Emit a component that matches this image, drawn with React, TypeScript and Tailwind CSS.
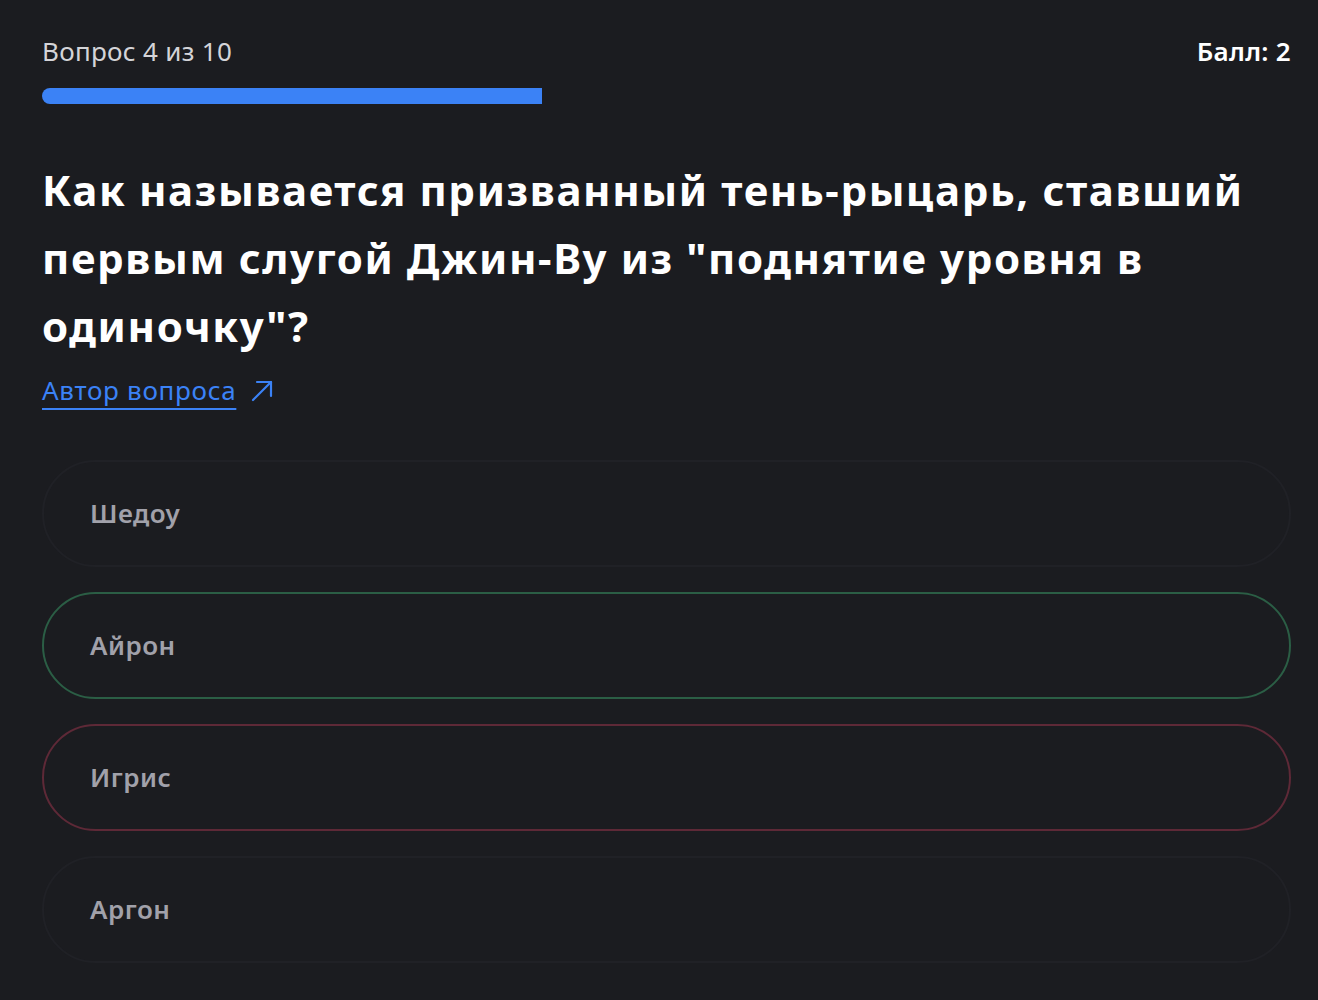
type Answer = { label: string; state: "idle" | "correct" | "wrong" };

const answers: Answer[] = [
  { label: "Шедоу", state: "idle" },
  { label: "Айрон", state: "correct" },
  { label: "Игрис", state: "wrong" },
  { label: "Аргон", state: "idle" },
];

const stateClass: Record<Answer["state"], string> = {
  idle: "border-[#202126]",
  correct: "border-[#2b5e45]",
  wrong: "border-[#5e2937]",
};

function ExternalArrow() {
  return (
    <svg width="24" height="24" viewBox="0 0 24 24" fill="none" stroke="currentColor" strokeWidth="2.2" strokeLinecap="round" strokeLinejoin="round">
      <path d="M3 22 L21 4" />
      <path d="M7 4 H21 V18" />
    </svg>
  );
}

export default function App() {
  const current = 4;
  const total = 10;
  return (
    <div
      className="min-h-screen w-full bg-[#1b1c20] text-white"
      style={{ fontFamily: '"Noto Sans", Roboto, sans-serif' }}
    >
      <div className="pl-[42px] pr-[27px] pt-[33px]">
        <div className="flex items-center justify-between">
          <span className="text-[26px] leading-[36px] tracking-[0.3px] text-[#d4d4d8]">
            Вопрос {current} из {total}
          </span>
          <span className="text-[26px] font-semibold leading-[36px] tracking-[0.3px] text-white">
            Балл: 2
          </span>
        </div>

        <div className="mt-[19px] h-[16px] w-full">
          <div
            className="h-full rounded-l-full bg-[#3b82f6]"
            style={{ width: `${(current / total) * 100}%` }}
          />
        </div>

        <h1 className="mt-[52px] text-[42px] font-bold leading-[68px] tracking-[1.6px] text-white">
          Как называется призванный тень-рыцарь, ставший первым слугой Джин-Ву из "поднятие уровня в
          одиночку"?
        </h1>

        <a
          href="#"
          className="mt-[12px] inline-flex items-center gap-[14px] text-[26px] leading-[36px] text-[#3b82f6]"
        >
          <span className="underline decoration-[1.5px] underline-offset-[8px] tracking-[0.7px]">
            Автор вопроса
          </span>
          <ExternalArrow />
        </a>

        <div className="mt-[52px] flex flex-col gap-[25px]">
          {answers.map((a) => (
            <button
              key={a.label}
              className={`flex h-[107px] w-full items-center rounded-full border-2 bg-[#1b1c20] pl-[46px] text-left text-[26px] font-semibold tracking-[0.5px] text-[#a1a1aa] ${stateClass[a.state]}`}
            >
              {a.label}
            </button>
          ))}
        </div>
      </div>
    </div>
  );
}
